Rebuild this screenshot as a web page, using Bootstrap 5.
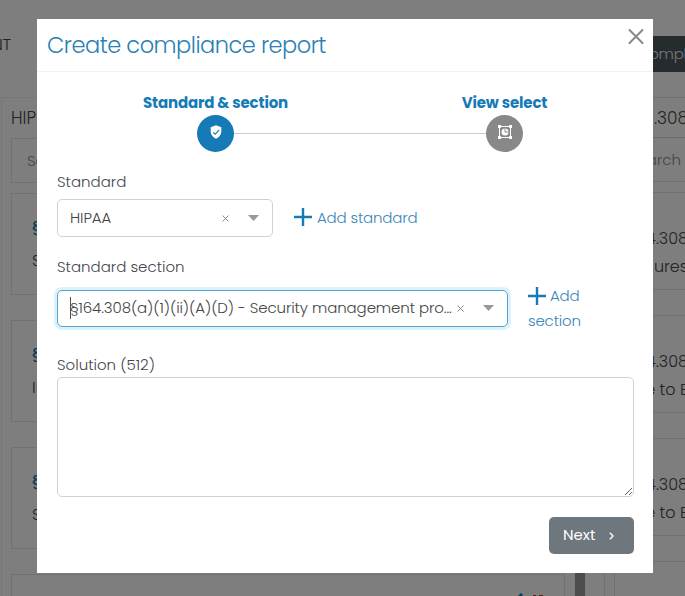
<!DOCTYPE html>
<html lang="en">
<head>
<meta charset="utf-8">
<meta name="viewport" content="width=device-width, initial-scale=1">
<title>Create compliance report</title>
<link href="https://cdn.jsdelivr.net/npm/bootstrap@5.3.0/dist/css/bootstrap.min.css" rel="stylesheet">
<style>
  :root { --brand: #157ab5; }
  body { font-family: Poppins, Inter, "Open Sans", sans-serif; font-feature-settings: "cv11"; font-size: 15px; font-weight: 300; line-height: 24px; color: #45464f; background: #fafcfb; height: 596px; overflow: hidden; }
  /* page behind the dialog */
  .page-shell { height: 596px; overflow: hidden; }
  .page-top { height: 97px; }
  .page-heading { width: 11px; direction: rtl; margin-top: 33px; white-space: nowrap; overflow: hidden; font-size: 16px; }
  .page-action { width: 52px; height: 36px; margin-top: 36px; padding-left: 5px; background: #4d565c; color: #e8ecee; line-height: 35px; font-size: 15px; letter-spacing: -.3px; }
  .pane-left { width: 603px; margin-left: 1px; padding: 0 39px 0 9px; border: 1px solid #ededed; border-width: 1px 0 0 1px; background: #fdfdfd; position: relative; }
  .pane-right { width: 81px; border: 1px solid #e2e2e2; border-width: 1px 0 0 1px; background: #fdfdfd; }
  .pane-title { height: 40px; line-height: 41px; font-size: 17px; color: #4a4a4a; }
  .pane-left .pane-title { letter-spacing: 0; }
  .tile { border: 1px solid #e2e2e2; padding: 20px 20px 0; white-space: nowrap; }
  .tile-search { height: 45px; padding: 0 15px; line-height: 43px; font-size: 15px; color: #8a8a8a; margin-bottom: 10px; }
  .pane-left .tile-item { height: 102px; margin-bottom: 25px; line-height: 34px; padding-top: 16px; font-size: 16px; }
  .pane-left .tile-tools { padding-top: 17px; }
  .tile-code { font-weight: 500; color: var(--brand); }
  .scroll-thumb { width: 10px; left: 573px; top: 100px; bottom: 0; background: #9a9a9a; }
  .pane-right .pane-title { border-bottom: 1px solid #d8d8d8; margin-right: -3px; }
  .pane-right .tile-item { height: 98px; margin: 0 -3px 25px 9px; padding: 32px 0 0; line-height: 28px; font-size: 16px; border-right: 0; }
  .pane-right .tile-search { border-width: 0 0 1px; height: 44px; padding-right: 4px; }
  .modal-backdrop.show { opacity: .5; }
  /* dialog */
  .modal-dialog.report-dialog { width: 616px; max-width: 616px; margin: 19px 0 0 37px; }
  .report-dialog .modal-content { height: 554px; border: 0; border-radius: 0; color: #45464f; }
  .report-dialog .modal-header { height: 53px; padding: 0 9px 0 10px; border-bottom: 1px solid #f0f1f2; border-radius: 0; }
  .report-title { font-size: 22.5px; font-weight: 300; color: #2a80b6; letter-spacing: -.5px; line-height: 52px; }
  .icon-close { margin-top: 7px; }
  .report-dialog .modal-body { padding: 19px 19px 0 20px; }
  .stepper { margin: 0 55px 0 84px; height: 62px; }
  .step { width: 149px; }
  .step-name { font-weight: 700; color: var(--brand); line-height: 24px; white-space: nowrap; letter-spacing: -.15px; }
  .step-dot { width: 37px; height: 37px; background: var(--brand); }
  .step-dot.idle { background: #888; }
  .step-track { height: 1px; background: #ccc; width: 252px; margin: 42px -56px 0 -56px; }
  .pick { height: 38px; border: 1px solid #d0d1d4; border-radius: 5px; padding: 0 13px 0 12px; }
  .pick-a { width: 216px; }
  .pick-b { width: 451px; height: 37px; padding-right: 13px; border-color: #4ca3d8; box-shadow: 0 0 0 3px #dff1fb; }
  .pick-text { white-space: nowrap; color: #444; letter-spacing: -.1px; }
  .pick-clear { margin-right: 19px; }
  .caret-line { width: 1px; height: 22px; background: #555; margin-right: -1px; }
  .label-line { line-height: 24px; }
  .label-first { margin: 17px 0 5px; }
  .label-second { margin: 18px 0 4px; }
  .label-third { margin-top: 20px; }
  .add-link { color: #3a86ba; text-decoration: none; line-height: 25px; gap: 5px; margin-left: 21px; letter-spacing: -.18px; }
  .add-link-single { margin-bottom: 2px; }
  .add-link-stack { margin-left: 20px; }
  .notes { height: 120px; border-color: #d0d1d4; border-radius: 5px; resize: vertical; }
  .btn-next { width: 85px; height: 37px; border: 0; border-radius: 5px; background: #6f777e; color: #fff; font-weight: 400; font-size: 15px; padding: 0 20px 0 14px; }
</style>
<script src="https://cdn.jsdelivr.net/npm/bootstrap@5.3.0/dist/js/bootstrap.bundle.min.js"></script>
</head>
<body>
<div class="page-shell d-flex flex-column">
  <div class="page-top d-flex justify-content-between align-items-start flex-shrink-0">
    <div class="page-heading">NT</div>
    <div class="page-action text-nowrap overflow-hidden">Compl</div>
  </div>
  <div class="d-flex flex-grow-1">
    <div class="pane-left flex-shrink-0">
      <div class="pane-title">HIP</div>
      <div class="tile tile-search">Se</div>
      <div class="tile tile-item"><div class="tile-code">§</div><div>S</div></div>
      <div class="tile tile-item"><div class="tile-code">§</div><div>In</div></div>
      <div class="tile tile-item"><div class="tile-code">§</div><div>S</div></div>
      <div class="tile tile-item tile-tools d-flex justify-content-end align-items-start gap-2">
        <svg width="10" height="10" viewBox="0 0 10 10"><path d="M1 9l1-3 5-5 2 2-5 5z" fill="#157ab5"/></svg>
        <svg width="12" height="10" viewBox="0 0 12 10"><path d="M1 4h3M7 4h4M2 5v5M10 5v5" stroke="#b33" stroke-width="2" fill="none"/></svg>
      </div>
      <div class="scroll-thumb position-absolute"></div>
    </div>
    <div class="pane-right flex-shrink-0 overflow-hidden">
      <div class="pane-title text-end">.308</div>
      <div class="tile tile-search text-end">arch</div>
      <div class="tile tile-item text-end">4.308<br>ures</div>
      <div class="tile tile-item text-end">4.308<br>e to E</div>
      <div class="tile tile-item text-end">4.308<br>e to E</div>
      <div class="tile tile-item"></div>
    </div>
  </div>
</div>
<div class="modal-backdrop show"></div>
<div class="modal d-block" tabindex="-1" role="dialog" aria-labelledby="reportTitle">
  <div class="modal-dialog report-dialog">
    <div class="modal-content">
      <div class="modal-header d-flex align-items-start">
        <h5 class="modal-title report-title" id="reportTitle">Create compliance report</h5>
        <svg class="icon-close flex-shrink-0" width="16" height="20" viewBox="0 -1 16 17" role="img" aria-label="Close"><path d="M1.500 1.500l13 13M14.500 1.500l-13 13" stroke="#888" stroke-width="2" stroke-linecap="round"/></svg>
      </div>
      <div class="modal-body">
        <div class="stepper d-flex align-items-start justify-content-between">
          <div class="step d-flex flex-column align-items-center">
            <span class="step-name">Standard &amp; section</span>
            <span class="step-dot rounded-circle d-flex align-items-center justify-content-center">
              <svg class="mb-1" width="12" height="14" viewBox="0 0 12 14"><path d="M6 .2l5.300 2v4.300c0 3.200-2.200 5.800-5.300 7.200C2.900 12.300.7 9.700.7 6.500V2.200z" fill="#fff"/><path d="M3.200 7.300l2 1.900 4-4.300" stroke="#157ab5" stroke-width="1.100" fill="none"/></svg>
            </span>
          </div>
          <div class="step-track flex-shrink-0"></div>
          <div class="step d-flex flex-column align-items-center">
            <span class="step-name">View select</span>
            <span class="step-dot idle rounded-circle d-flex align-items-center justify-content-center">
              <svg class="mb-1" width="14" height="14" viewBox="0 0 14 14"><path d="M1.500 1.500h11v11h-11z" stroke="#fff" fill="none"/><path d="M0 0h3v3H0zM11 0h3v3h-3zM0 11h3v3H0zM11 11h3v3h-3z" fill="#fff"/><circle cx="7" cy="7" r="3.500" fill="#fff"/><path d="M7 3.500V7h3.500" stroke="#888" fill="none"/></svg>
            </span>
          </div>
        </div>
        <div class="label-line label-first">Standard</div>
        <div class="d-flex align-items-center">
          <div class="pick pick-a d-flex align-items-center">
            <span class="pick-text">HIPAA</span>
            <svg class="pick-clear ms-auto" width="7" height="7" viewBox="0 0 7 7"><path d="M.5.5l6 6M6.500.5l-6 6" stroke="#888"/></svg>
            <svg width="11" height="6" viewBox="0 0 11 6"><path d="M0 0h11L5.500 6z" fill="#999"/></svg>
          </div>
          <a class="add-link add-link-single d-flex align-items-center"><svg width="18" height="18" viewBox="0 0 18 18"><path d="M9 0v18M0 9h18" stroke="#157ab5" stroke-width="2.400"/></svg><span>Add standard</span></a>
        </div>
        <div class="label-line label-second">Standard section</div>
        <div class="d-flex align-items-center">
          <div class="pick pick-b d-flex align-items-center">
            <span class="caret-line"></span>
            <span class="pick-text">§164.308(a)(1)(ii)(A)(D) - Security management pro...</span>
            <svg class="pick-clear ms-auto flex-shrink-0" width="7" height="7" viewBox="0 0 7 7"><path d="M.5.5l6 6M6.500.5l-6 6" stroke="#888"/></svg>
            <svg class="flex-shrink-0" width="11" height="6" viewBox="0 0 11 6"><path d="M0 0h11L5.500 6z" fill="#999"/></svg>
          </div>
          <a class="add-link add-link-stack d-flex flex-column gap-0"><span class="d-flex align-items-center"><svg class="me-1" width="18" height="18" viewBox="0 0 18 18"><path d="M9 0v18M0 9h18" stroke="#157ab5" stroke-width="2.400"/></svg><span>Add</span></span><span>section</span></a>
        </div>
        <div class="label-line label-third">Solution (512)</div>
        <textarea class="form-control notes" aria-label="Solution"></textarea>
        <div class="d-flex justify-content-end mt-3 pt-1">
          <button class="btn btn-next d-flex align-items-center justify-content-between"><span>Next</span><svg width="5" height="8" viewBox="0 0 5 8"><path d="M.8.8L4 4 .8 7.200" stroke="#fff" stroke-width="1.400" fill="none"/></svg></button>
        </div>
      </div>
    </div>
  </div>
</div>
</body>
</html>
